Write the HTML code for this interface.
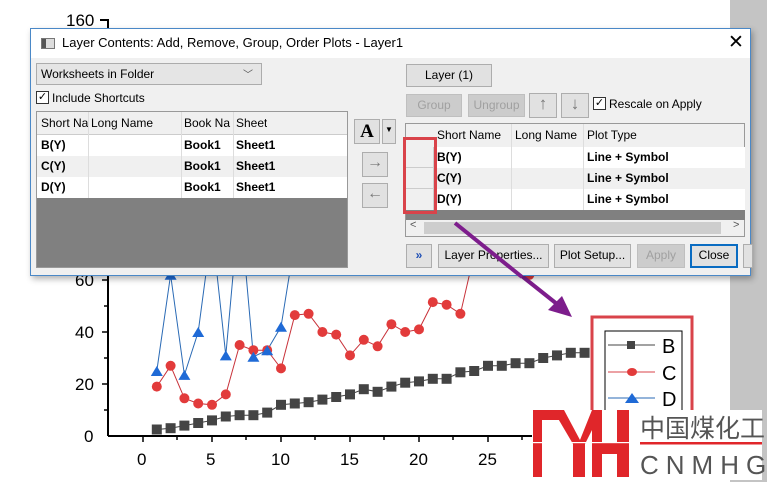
<!DOCTYPE html>
<html><head><meta charset="utf-8"><style>
*{box-sizing:border-box;margin:0;padding:0}
body{width:767px;height:482px;overflow:hidden;background:#fff;position:relative;font-family:"Liberation Sans",sans-serif;font-size:12px;color:#000}
.a{position:absolute}
.btn{position:absolute;background:#e1e1e1;border:1px solid #adadad;text-align:center;font-size:12px;line-height:20px}
.dis{color:#a0a0a0;background:#ccc;border-color:#bfbfbf}
.cell{position:absolute;font-size:12px;line-height:21px;padding-left:3px;white-space:nowrap;overflow:hidden}
.b{font-weight:bold}
.cb{position:absolute;width:13px;height:13px;border:1px solid #333;background:#fff;font-size:11px;line-height:11px;text-align:center}
</style></head><body>
<div class="a" style="left:730px;top:0;width:37px;height:482px;background:#c4c4c4"></div>
<svg class="a" style="left:0;top:0" width="767" height="482" id="ch">
<g font-family="Liberation Sans" font-size="17" fill="#000">
<text x="66" y="26">160</text>
<text x="75" y="286">60</text><text x="75" y="338">40</text><text x="75" y="390">20</text><text x="84" y="442">0</text>
<text x="137" y="465">0</text><text x="206" y="465">5</text><text x="271" y="465">10</text><text x="340" y="465">15</text><text x="409" y="465">20</text><text x="478" y="465">25</text>
</g>
<path d="M100 20h8v416M108 436H540" stroke="#000" stroke-width="2" fill="none"/>
<path d="M102 280h6M102 332h6M102 384h6M104 306h4M104 358h4M104 410h4M143 436v6M212 436v6M281 436v6M350 436v6M419 436v6M488 436v6M177 436v4M246 436v4M315 436v4M384 436v4M453 436v4M522 436v4" stroke="#000" stroke-width="1.5"/>
<g id="data"></g>
<path d="M455 223L562 308" stroke="#7d1d8c" stroke-width="4"/>
<path d="M572 317L548 310L562 296Z" fill="#7d1d8c"/>
<rect x="592" y="317" width="100" height="100" fill="none" stroke="#d9434a" stroke-width="3"/>
<rect x="605" y="331" width="77" height="90" fill="#fff" stroke="#000" stroke-width="1"/>
<path d="M608 345h47" stroke="#444"/><rect x="627" y="341" width="8" height="8" fill="#444"/>
<path d="M608 372h47" stroke="#d9434a"/><ellipse cx="632" cy="372" rx="5" ry="4" fill="#e23b3b"/>
<path d="M608 398h47" stroke="#2a6ab5"/><path d="M625 403l7-10 7 10z" fill="#1f6ad6"/>
<g font-family="Liberation Sans" font-size="20"><text x="662" y="353">B</text><text x="662" y="380">C</text><text x="662" y="406">D</text></g>
<rect x="532" y="410" width="230" height="70" fill="#fff"/>
<g fill="#e0262a">
<rect x="533" y="410" width="9" height="67"/>
<rect x="533" y="410" width="30" height="10"/>
<path d="M553 410h11l16 30 12-30h6v8l-13 26v33h-12v-33z"/>
<rect x="592" y="410" width="10" height="67"/>
<rect x="617" y="410" width="12" height="67"/>
<rect x="592" y="443" width="37" height="11"/>
<rect x="640" y="442" width="122" height="2.5"/></g>
<rect x="532" y="442" width="100" height="1.2" fill="#fff"/>
<text x="640" y="437" font-family="Noto Sans CJK SC,sans-serif" font-size="25" fill="#555">中国煤化工</text>
<text x="640" y="474" font-family="Liberation Sans" font-size="26" fill="#555" letter-spacing="7">CNMHG</text>
</svg>
<script>
var B=[2.5,3,4,5,6,7.5,8,8,9,12,12.5,13,14,15,16,18,17,19,20.5,21,22,22,24.5,25,27,27,28,28,30,31,32,32];
var C=[19,27,14.5,12.5,12,16,35,33,33,26,46.5,47,40,39,31,37,34.5,43,40,41,51.5,50.5,47,70,80,80,75,62];
var D=[25,62,23.5,40,80,31,90,30.5,33,42,75];
function X(i){return 143+(i+1)*13.8}function Y(v){return 436-v*2.6}
var s='';
function line(a,c){var p=a.map(function(v,i){return X(i).toFixed(1)+','+Y(v).toFixed(1)}).join(' ');s+='<polyline points="'+p+'" fill="none" stroke="'+c+'" stroke-width="1"/>'}
line(D,'#2a6ab5');line(C,'#c8323a');line(B,'#444');
B.forEach(function(v,i){s+='<rect x="'+(X(i)-5)+'" y="'+(Y(v)-5)+'" width="10" height="10" fill="#444"/>'});
C.forEach(function(v,i){s+='<circle cx="'+X(i)+'" cy="'+Y(v)+'" r="5" fill="#e23b3b"/>'});
D.forEach(function(v,i){s+='<path d="M'+(X(i)-6)+' '+(Y(v)+5)+'l6-10 6 10z" fill="#1f6ad6"/>'});
document.getElementById('data').innerHTML=s;
</script>
<!-- dialog -->
<div class="a" style="left:30px;top:28px;width:721px;height:248px;background:#f0f0f0;border:1px solid #4a88c7;box-shadow:2px 3px 6px rgba(0,0,0,.3)">
<div class="a" style="left:0;top:0;width:719px;height:29px;background:#fff"></div>
<div class="a" style="left:10px;top:9px;width:14px;height:11px;border:1px solid #777;background:#ddd"><div style="width:4px;height:9px;background:#555"></div></div>
<div class="a" style="left:31px;top:6px;font-size:13px">Layer Contents: Add, Remove, Group, Order Plots - Layer1</div>
<div class="a" style="left:697px;top:2px;font-size:19px;font-weight:100">✕</div>
</div>
<div class="a" style="left:36px;top:63px;width:226px;height:22px;background:#e5e5e5;border:1px solid #acacac;padding:3px 4px;font-size:12px">Worksheets in Folder<span style="position:absolute;right:8px;top:2px;font-size:10px;color:#555">﹀</span></div>
<div class="cb" style="left:36px;top:91px">✓</div><div class="a" style="left:52px;top:91px">Include Shortcuts</div>
<div class="a" style="left:36px;top:111px;width:312px;height:157px;background:#808080;border:1px solid #999"></div>
<div class="a" style="left:37px;top:112px;width:310px;height:23px;background:#f0f0f0;border-bottom:1px solid #ccc"></div>
<div class="a" style="left:37px;top:135px;width:310px;height:21px;background:#fff"></div>
<div class="a" style="left:37px;top:156px;width:310px;height:21px;background:#f0f0f0"></div>
<div class="a" style="left:37px;top:177px;width:310px;height:21px;background:#fff"></div>
<div class="a" style="left:88px;top:112px;width:1px;height:86px;background:#ddd"></div><div class="a" style="left:181px;top:112px;width:1px;height:86px;background:#ddd"></div><div class="a" style="left:233px;top:112px;width:1px;height:86px;background:#ddd"></div>
<div class="cell" style="left:38px;top:113px;width:50px">Short Na</div><div class="cell" style="left:88px;top:113px">Long Name</div><div class="cell" style="left:181px;top:113px;width:52px">Book Na</div><div class="cell" style="left:233px;top:113px">Sheet</div>
<div class="cell b" style="left:38px;top:135px">B(Y)</div><div class="cell b" style="left:181px;top:135px">Book1</div><div class="cell b" style="left:233px;top:135px">Sheet1</div>
<div class="cell b" style="left:38px;top:156px">C(Y)</div><div class="cell b" style="left:181px;top:156px">Book1</div><div class="cell b" style="left:233px;top:156px">Sheet1</div>
<div class="cell b" style="left:38px;top:177px">D(Y)</div><div class="cell b" style="left:181px;top:177px">Book1</div><div class="cell b" style="left:233px;top:177px">Sheet1</div>
<div class="btn" style="left:354px;top:119px;width:26px;height:25px;font-family:'Liberation Serif';font-weight:bold;font-size:19px;line-height:23px">A</div>
<div class="btn" style="left:382px;top:119px;width:14px;height:25px;font-size:8px">▼</div>
<div class="btn" style="left:362px;top:152px;width:26px;height:25px;color:#777;font-size:16px">→</div>
<div class="btn" style="left:362px;top:183px;width:26px;height:25px;color:#777;font-size:16px">←</div>
<div class="btn" style="left:406px;top:64px;width:86px;height:23px">Layer (1)</div>
<div class="btn dis" style="left:406px;top:94px;width:56px;height:23px">Group</div>
<div class="btn dis" style="left:468px;top:94px;width:57px;height:23px">Ungroup</div>
<div class="btn" style="left:529px;top:93px;width:28px;height:25px;color:#777;font-size:17px">↑</div>
<div class="btn" style="left:561px;top:93px;width:28px;height:25px;color:#777;font-size:17px">↓</div>
<div class="cb" style="left:593px;top:97px">✓</div><div class="a" style="left:609px;top:97px">Rescale on Apply</div>
<div class="a" style="left:405px;top:123px;width:340px;height:114px;background:#f0f0f0;border:1px solid #999"></div>
<div class="a" style="left:406px;top:147px;width:339px;height:21px;background:#fff"></div>
<div class="a" style="left:406px;top:168px;width:339px;height:21px;background:#f0f0f0"></div>
<div class="a" style="left:406px;top:189px;width:339px;height:21px;background:#fff"></div>
<div class="a" style="left:406px;top:210px;width:339px;height:10px;background:#808080"></div>
<div class="a" style="left:406px;top:147px;width:28px;height:63px;background:#f0f0f0;border-right:1px solid #ccc"></div>
<div class="a" style="left:406px;top:167px;width:28px;height:1px;background:#ccc"></div><div class="a" style="left:406px;top:188px;width:28px;height:1px;background:#ccc"></div>
<div class="a" style="left:511px;top:124px;width:1px;height:86px;background:#ddd"></div><div class="a" style="left:583px;top:124px;width:1px;height:86px;background:#ddd"></div>
<div class="cell" style="left:434px;top:125px">Short Name</div><div class="cell" style="left:512px;top:125px">Long Name</div><div class="cell" style="left:584px;top:125px">Plot Type</div>
<div class="cell b" style="left:434px;top:147px">B(Y)</div><div class="cell b" style="left:584px;top:147px">Line + Symbol</div>
<div class="cell b" style="left:434px;top:168px">C(Y)</div><div class="cell b" style="left:584px;top:168px">Line + Symbol</div>
<div class="cell b" style="left:434px;top:189px">D(Y)</div><div class="cell b" style="left:584px;top:189px">Line + Symbol</div>
<div class="a" style="left:424px;top:222px;width:297px;height:12px;background:#cdcdcd"></div>
<div class="a" style="left:410px;top:219px;font-size:11px;color:#555">&lt;</div><div class="a" style="left:733px;top:219px;font-size:11px;color:#555">&gt;</div>
<div class="a" style="left:403px;top:137px;width:34px;height:77px;border:3px solid #d9434a"></div>
<div class="btn" style="left:406px;top:244px;width:26px;height:24px;color:#1f4fb5;font-weight:bold">»</div>
<div class="btn" style="left:438px;top:244px;width:111px;height:24px">Layer Properties...</div>
<div class="btn" style="left:554px;top:244px;width:77px;height:24px">Plot Setup...</div>
<div class="btn dis" style="left:637px;top:244px;width:48px;height:24px">Apply</div>
<div class="btn" style="left:690px;top:244px;width:48px;height:24px;border:2px solid #0a6cc2;line-height:19px">Close</div>
<div class="btn" style="left:743px;top:244px;width:10px;height:24px"></div>
<svg class="a" style="left:440px;top:215px" width="100" height="70"><path d="M15 8L82 62" stroke="#7d1d8c" stroke-width="4"/></svg>
</body></html>
